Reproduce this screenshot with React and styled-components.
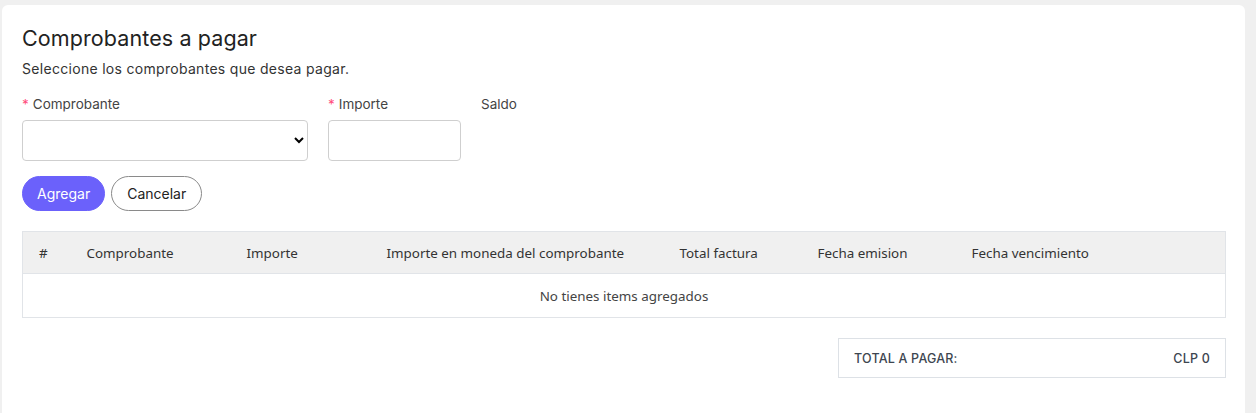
import React from "react";
import styled, { createGlobalStyle } from "styled-components";

const Global = createGlobalStyle`
  html, body { margin: 0; padding: 0; background: #f0f0f0; }
  body { font-family: Inter, "Noto Sans", sans-serif; color: #222; }
  * { box-sizing: border-box; }
`;

const Page = styled.div`
  padding: 5px 11px 0 2px;
`;

const Card = styled.section`
  background: #fff;
  border-radius: 6px;
  padding: 20px 19px 40px 20px;
  min-height: 420px;
`;

const Title = styled.h2`
  margin: 0;
  font-size: 21.5px;
  font-weight: 400;
  color: #222;
  line-height: 26px;
  letter-spacing: 0.1px;
`;

const Subtitle = styled.p`
  margin: 9px 0 0;
  font-size: 14px;
  color: #333;
  line-height: 18px;
  letter-spacing: 0.3px;
`;

const FormRow = styled.div`
  display: flex;
  gap: 20px;
  margin-top: 18px;
  align-items: flex-start;
`;

const Field = styled.div`
  display: flex;
  flex-direction: column;
  width: ${(p) => p.$w}px;
`;

const Label = styled.label`
  font-size: 13.5px;
  color: #444;
  line-height: 17px;
  height: 17px;
  margin-bottom: 7px;
  white-space: nowrap;
`;

const Req = styled.span`
  color: #ff4d7d;
  margin-right: 4px;
`;

const Select = styled.select`
  height: 41px;
  border: 1px solid #cfcfcf;
  border-radius: 4px;
  background: #fff;
  font-size: 14px;
  padding: 0 8px;
`;

const Input = styled.input`
  height: 41px;
  border: 1px solid #cfcfcf;
  border-radius: 4px;
  background: #fff;
  font-size: 14px;
  padding: 0 8px;
`;

const Buttons = styled.div`
  display: flex;
  gap: 6px;
  margin-top: 15px;
`;

const Button = styled.button`
  height: 35px;
  padding: 0 ${(p) => (p.$primary ? 14 : 15)}px;
  border-radius: 18px;
  font-family: Inter, "Noto Sans", sans-serif;
  font-size: 14px;
  cursor: pointer;
  border: 1px solid ${(p) => (p.$primary ? "#6b61fb" : "#8a8a8a")};
  background: ${(p) => (p.$primary ? "#6b61fb" : "#fff")};
  color: ${(p) => (p.$primary ? "#fff" : "#222")};
`;

const Table = styled.table`
  width: 100%;
  margin-top: 20px;
  border-collapse: collapse;
  border: 1px solid #e1e4e8;
  font-family: "Noto Sans", sans-serif;
  font-size: 13.4px;
  color: #333;
  table-layout: fixed;
`;

const Th = styled.th`
  background: #f0f0f0;
  text-align: left;
  font-weight: 400;
  height: 42px;
  padding: 0 16px;
  border-bottom: 1px solid #e1e4e8;
  white-space: nowrap;
`;

const Empty = styled.td`
  height: 44px;
  text-align: center;
  color: #444;
`;

const TotalWrap = styled.div`
  display: flex;
  justify-content: flex-end;
  margin-top: 20px;
`;

const TotalBox = styled.div`
  width: 388px;
  height: 40px;
  border: 1px solid #dde1e6;
  display: flex;
  align-items: center;
  justify-content: space-between;
  padding: 0 15px;
  font-size: 12.5px;
  font-weight: 500;
  color: #3d4650;
  letter-spacing: 0.2px;
`;

const cols = [
  ["#", 48],
  ["Comprobante", 160],
  ["Importe", 140],
  ["Importe en moneda del comprobante", 293],
  ["Total factura", 138],
  ["Fecha emision", 154],
  ["Fecha vencimiento", null],
];

export default function App() {
  return (
    <Page>
      <Global />
      <Card>
        <Title>Comprobantes a pagar</Title>
        <Subtitle>Seleccione los comprobantes que desea pagar.</Subtitle>
        <FormRow>
          <Field $w={286}>
            <Label><Req>*</Req>Comprobante</Label>
            <Select defaultValue="">
              <option value=""></option>
            </Select>
          </Field>
          <Field $w={133}>
            <Label><Req>*</Req>Importe</Label>
            <Input />
          </Field>
          <Field $w={100}>
            <Label>Saldo</Label>
          </Field>
        </FormRow>
        <Buttons>
          <Button $primary>Agregar</Button>
          <Button>Cancelar</Button>
        </Buttons>
        <Table>
          <colgroup>
            {cols.map(([n, w]) => (
              <col key={n} style={w ? { width: w } : undefined} />
            ))}
          </colgroup>
          <thead>
            <tr>
              {cols.map(([n]) => (
                <Th key={n}>{n}</Th>
              ))}
            </tr>
          </thead>
          <tbody>
            <tr>
              <Empty colSpan={7}>No tienes items agregados</Empty>
            </tr>
          </tbody>
        </Table>
        <TotalWrap>
          <TotalBox>
            <span>TOTAL A PAGAR:</span>
            <span>CLP 0</span>
          </TotalBox>
        </TotalWrap>
      </Card>
    </Page>
  );
}
